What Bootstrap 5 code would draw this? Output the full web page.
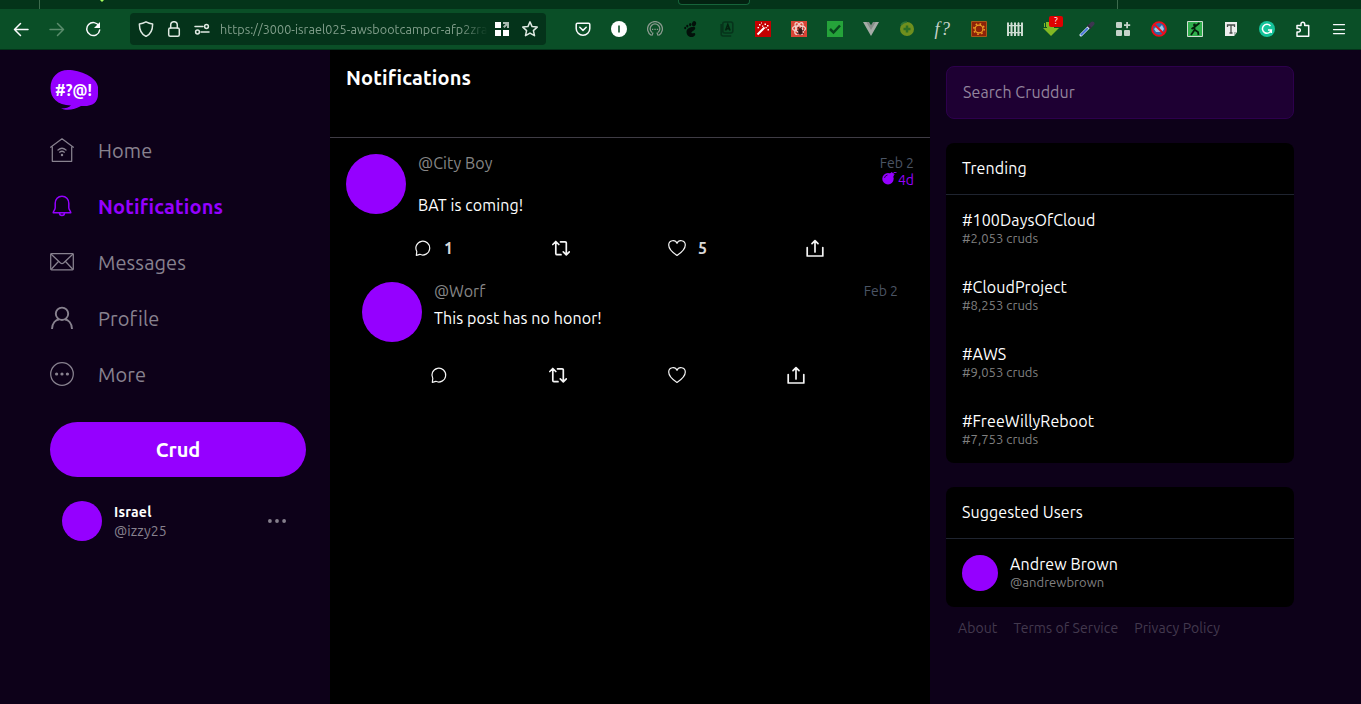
<!DOCTYPE html>
<html lang="en">
<head>
<meta charset="utf-8">
<title>Cruddur - Notifications</title>
<link href="https://cdn.jsdelivr.net/npm/bootstrap@5.3.0/dist/css/bootstrap.min.css" rel="stylesheet">
<style>
:root{--purple:#9500ff;--night:#0d0119;--gray:#88828f}
body{font-family:Ubuntu,"Noto Sans",sans-serif;background:var(--night);color:#fff;height:704px;overflow:hidden;line-height:18px;font-size:16px;letter-spacing:.09px}
svg{display:block;flex:none}
.ln{fill:none;stroke:currentColor;stroke-width:1.5;stroke-linecap:round;stroke-linejoin:round}
.thin{stroke-width:1.25}
.t{white-space:nowrap;display:block}
.tabstrip{height:9px;background:#043419}
.tabsep{width:1px;height:9px;background:#3d6b4d}
.tabpeek{width:72px;height:5px;background:#032211;border:1px solid #16643a;border-top:0;border-radius:0 0 4px 4px}
.toolbar{height:41px;background:#0a4f27;border-bottom:1px solid #04331a;padding-left:3px;color:#fbfbfe}
.tool{width:36px;height:40px;display:flex;align-items:center;justify-content:center}
.urlbar{width:416px;height:32px;background:#04331a;border-radius:4px;margin-left:19px;margin-right:19px;color:#dfe9e2}
.urltext{width:268px;margin-left:10px;font-size:12.6px;letter-spacing:.05px;color:#829f8c;-webkit-mask-image:linear-gradient(90deg,#000 90%,transparent)}
.app{height:654px}
.sidebar-left{width:330px;padding:20px 24px 0 50px}
.navrow{height:56px;color:var(--gray);text-decoration:none;font-size:20px;gap:24px}
.navrow .t{padding-top:2px}
.navrow.on{color:var(--purple);font-weight:700;letter-spacing:.17px}
.crud{height:55px;border-radius:28px;background:var(--purple);color:#fff;font-weight:700;font-size:20px;border:0;margin-top:20px}
.ava{background:var(--purple);border-radius:50%;flex:none}
.me{padding:24px 18px 0 12px;gap:12px;font-size:14px}
.feed{width:600px;background:#000}
.feedhead{height:88px;border-bottom:1px solid #3f3c45;padding:19px 16px;font-size:20px;font-weight:700;letter-spacing:.17px}
.post{padding:16px 16px 0}
.reply{padding:24px 32px 0}
.handle{color:#868686}
.when{font-size:14px;letter-spacing:0;color:#4b5464}
.acts{color:#f5f5f5}
.count{font-weight:700;color:#d9d9d9}
.sidebar-right{width:364px;padding:16px 0 0 16px}
.search{height:53px;background:#1e0033;border:1px solid #2d004d;border-radius:8px;color:#93859d;padding:0 16px 1px}
.panel{background:#000;border-radius:8px;margin-top:24px}
.panelhead{height:52px;border-bottom:1px solid #1f2430;padding:0 16px 1px}
.tag{height:67px;padding:16px 16px 0}
.sub{color:#808080;font-size:13px;letter-spacing:.04px}
.foot{padding:12px 12px;gap:16px;font-size:14px;color:#43394e}
</style>
</head>
<body>
<header>
<div class="tabstrip d-flex">
<div class="tabsep" style="margin-left:39px"></div>
<svg width="6" height="3" style="margin-left:59px" viewBox="0 0 6 3"><path d="M1 0h4L3 2z" fill="#a6ff5c"/></svg>
<div class="tabpeek" style="margin-left:573px"></div>
<div class="tabsep" style="margin-left:367px"></div>
</div>
<div class="toolbar d-flex align-items-center">
<div class="tool"><svg class="ln" width="16" height="16" viewBox="0 0 16 16"><path d="M15 8.500H1.500M7.500 2.500l-6 6 6 6"/></svg></div>
<div class="tool" style="color:#5a8c6c"><svg class="ln" width="16" height="16" viewBox="0 0 16 16"><path d="M1 8.500h13.500M8.500 2.500l6 6-6 6"/></svg></div>
<div class="tool"><svg width="16" height="16" viewBox="0 0 16 16"><path class="ln" d="M14 5A6.500 6.500 0 1 0 14.700 9"/><path fill="currentColor" d="M15 1v6H9z"/></svg></div>
<div class="urlbar d-flex align-items-center">
<svg class="ln" style="margin-left:8px" width="16" height="16" viewBox="0 0 16 16"><path d="M8 .8c2.500 1.300 4.600 1.900 6.600 2.200C14.700 8.500 13 13 8 15.400 3 13 1.300 8.500 1.400 3 3.400 2.700 5.500 2.100 8 .8z"/></svg>
<svg class="ln" style="margin-left:12px" width="16" height="16" viewBox="0 0 16 16"><rect x="2.700" y="7" width="10.600" height="8.200" rx="1.500"/><path d="M4.700 7V4a3.300 3.300 0 0 1 6.600 0v3"/></svg>
<svg class="ln" style="margin-left:12px" width="16" height="16" viewBox="0 0 16 16"><path d="M1 5.500h8M7 11h8"/><circle cx="12.500" cy="5.500" r="1.900"/><circle cx="3.500" cy="11" r="1.900"/></svg>
<div class="urltext"><span class="t">https://3000-israel025-awsbootcampcr-afp2zra</span></div>
<svg style="margin-left:6px" width="16" height="16" viewBox="0 0 16 16" fill="#fff"><path d="M1 1h6v6H1zM1 9h6v6H1zM9 9h6v6H9z"/><path fill="#a9b9af" d="M9 1h6v6h-2V4.500L10.500 7 9 5.500 11.500 3H9z"/></svg>
<svg class="ln" style="margin-left:12px" width="16" height="16" viewBox="0 0 16 16"><path d="M8 .9l2.100 4.700 5.100.5-3.800 3.500 1.100 5.100L8 12.100l-4.500 2.600 1.100-5.100L.8 6.100l5.100-.5z"/></svg>
</div>
<div class="tool"><svg class="ln" width="16" height="16" viewBox="0 0 16 16"><path d="M2.500 2.200h11q1.300 0 1.300 1.300V7.500a6.800 6.800 0 0 1-13.600 0V3.500q0-1.300 1.300-1.300zM4.800 6.200 8 9.400l3.200-3.200"/></svg></div>
<div class="tool"><svg width="16" height="16" viewBox="0 0 16 16"><circle cx="8" cy="8" r="8" fill="#fff"/><path d="M7.200 4.500h1.600v7H7.200z" fill="#0a4f27"/></svg></div>
<div class="tool"><svg width="16" height="16" viewBox="0 0 16 16" fill="none" stroke="#8a9a8e" stroke-width="1.300"><path d="M4.500 14.500a7.400 7.400 0 1 1 7 0M5 11.500a4.800 4.800 0 1 1 6 0"/><path d="M5 8.300h1.300M7.400 8.300h1.300M9.800 8.300h1.300M5 14.500l1-3M11 14.500l-1-3"/></svg></div>
<div class="tool"><svg width="16" height="16" viewBox="0 0 16 16" fill="#03100a"><ellipse cx="11" cy="2.800" rx="2" ry="2.700" transform="rotate(20 11 2.800)"/><ellipse cx="7.200" cy="3.600" rx="1.200" ry="1.600"/><ellipse cx="4.300" cy="5.100" rx="1.100" ry="1.400"/><ellipse cx="2.200" cy="7" rx="1" ry="1.300"/><path d="M12 6.300C8 5.500 3.500 7.500 3.500 11c0 3 2.500 5 5 5s4.500-2 3.500-3.500-2.500.5-3.500-.5C7.500 10.500 13.500 9.500 12 6.300z"/></svg></div>
<div class="tool"><svg width="16" height="16" viewBox="0 0 16 16" fill="none" stroke="#06341b" stroke-width="1.600"><rect x="3.800" y="1" width="10" height="11" rx="2"/><path d="M2.200 3v10q0 2 2 2h8"/><path stroke="#03210f" d="m6.600 9.500 2.200-6 2.200 6M7.200 7.700h3.200"/></svg></div>
<div class="tool"><svg width="16" height="16" viewBox="0 0 16 16"><path fill="#c40000" d="M0 0h16v16H0z"/><path stroke="#fff" stroke-width="2" d="m2.500 13.500 7-7"/><path fill="#fff" d="M4 3h1.500v1.500H4zM7 4.500h1.300v1.300H7zM9.500 2.500H11V4H9.500zM12 4h1.500v1.500H12zM10.500 6h1.300v1.300h-1.300zM12.500 8H14v1.500h-1.500zM2.500 6H4v1.300H2.500zM6 1.500h1v1H6z"/></svg></div>
<div class="tool"><svg width="16" height="16" viewBox="0 0 16 16"><path fill="#d94436" d="M0 0h16v16H0z"/><g fill="none" stroke="#f1cec9" stroke-width="1.300"><ellipse cx="8" cy="7.500" rx="6.500" ry="2.700"/><ellipse cx="8" cy="7.500" rx="6.500" ry="2.700" transform="rotate(60 8 7.500)"/><ellipse cx="8" cy="7.500" rx="6.500" ry="2.700" transform="rotate(120 8 7.500)"/></g><ellipse cx="9.300" cy="10.500" rx="2" ry="3.300" fill="#3b1616"/><path d="m6 9 7 4M6 13l7-4M7 6l2 3 2-3" stroke="#3b1616" fill="none"/></svg></div>
<div class="tool"><svg width="16" height="16" viewBox="0 0 16 16"><path fill="#25a33a" d="M0 0h16v16H0z"/><path d="m3 8 3.500 3.500L13 4.500" fill="none" stroke="#08451d" stroke-width="2.500"/></svg></div>
<div class="tool"><svg width="16" height="16" viewBox="0 0 16 16"><path fill="#a5aca7" d="M0 1h5l3 5 3-5h5L8 15z"/><path fill="#868d89" d="M3.300 1H6l2 3.300L10 1h2.700L8 9z"/></svg></div>
<div class="tool"><svg width="16" height="16" viewBox="0 0 16 16"><circle cx="8" cy="8" r="7" fill="#6f8f1e"/><path d="M8 4.500v7M4.500 8h7" stroke="#2c6f24" stroke-width="2.500"/><path d="M2 4a7 7 0 0 1 6-3" fill="none" stroke="#2c7335" stroke-width="1.500"/></svg></div>
<div class="tool"><span style="font:italic 18px 'Liberation Serif',serif;color:#c5d2c9;letter-spacing:1.500px">f?</span></div>
<div class="tool"><svg width="16" height="16" viewBox="0 0 16 16"><path fill="#8e2209" stroke="#a55a19" d="M.5.500h15v15H.5z"/><circle cx="8" cy="8" r="3.900" fill="none" stroke="#e99c23" stroke-width="1.200"/><circle cx="8" cy="8" r="5.200" fill="none" stroke="#e99c23" stroke-width="1.600" stroke-dasharray="1.600 2.480"/></svg></div>
<div class="tool"><svg width="16" height="16" viewBox="0 0 16 16" fill="#cddbd1"><path d="M0 2l1-1 1 1v13H0zM3.500 2l1-1 1 1v13h-2zM7 2l1-1 1 1v13H7zM10.500 2l1-1 1 1v13h-2zM14 2l1-1 1 1v13h-2z"/><path d="M0 4h16v1.200H0zM0 11h16v1.200H0z"/></svg></div>
<div class="tool position-relative"><svg width="16" height="16" viewBox="0 0 16 16"><path fill="#82b923" d="M4 1h2v1h5v5h5l-8 8-8-8h4z"/><path stroke="#82b923" d="M1.500 2v4M3.500 1v5"/></svg><span class="position-absolute text-center" style="left:16px;top:7px;width:14px;height:11px;border-radius:2px;background:#e00000;color:#fff;font-size:9px;line-height:11px">?</span></div>
<div class="tool"><svg width="16" height="16" viewBox="0 0 16 16"><path stroke="#e7efff" stroke-width="3" stroke-linecap="round" d="m2 14 8-8"/><path stroke="#4473d8" stroke-width="1.900" stroke-linecap="round" d="m2.300 13.700 6-6"/><path stroke="#3d3650" stroke-width="4" stroke-linecap="round" d="m11.500 4.500 2-2"/><path stroke="#332c3d" stroke-width="2" d="m8.500 4 3.500 3.500"/></svg></div>
<div class="tool"><svg width="16" height="16" viewBox="0 0 16 16" fill="#c5d3ca"><rect x="1" y="1" width="6" height="6" rx="1"/><rect x="1" y="9" width="6" height="6" rx="1"/><rect x="9" y="9" width="6" height="6" rx="1"/><path d="M11.200 1h1.800v2.200h2.200V5H13v2.200h-1.800V5H9V3.200h2.200z"/></svg></div>
<div class="tool"><svg width="16" height="16" viewBox="0 0 16 16"><circle cx="8" cy="8" r="7" fill="#2c68a8"/><path d="M3 8l3-3 2 2 3-3 2 4-2 3H5z" fill="#9fc5e5"/><circle cx="8" cy="8" r="6.900" fill="none" stroke="#f00b18" stroke-width="1.900"/><path d="m3.500 3.500 9 9" stroke="#f00b18" stroke-width="1.900"/></svg></div>
<div class="tool"><svg width="16" height="16" viewBox="0 0 16 16"><path fill="#2fae4c" stroke="#d1ddd3" d="M.5.500h15v15H.5z"/><path d="m4 14 3.500-5V6l5-4M8 9l3 2 .5 3M4.500 8l3-2" fill="none" stroke="#041e0b" stroke-width="1.800"/><circle cx="7.500" cy="4" r="1.400" fill="#041e0b"/></svg></div>
<div class="tool"><svg width="16" height="16" viewBox="0 0 16 16"><path fill="#eee" d="M2 1h12v10l-3 4H2z"/><path fill="#aeb5b0" d="M14 11h-3v4z"/><path d="M4.500 6V4h7v2M8 4v8M6.500 12h3" fill="none" stroke="#454c48" stroke-width="1.300"/></svg></div>
<div class="tool"><svg width="16" height="16" viewBox="0 0 16 16"><circle cx="8" cy="8" r="8" fill="#15c39a"/><path d="M11.500 5A4.500 4.500 0 1 0 12.300 9H9M12.300 9v3" fill="none" stroke="#fff" stroke-width="1.500"/></svg></div>
<div class="tool"><svg class="ln" width="16" height="16" viewBox="0 0 16 16"><path d="M2 15.200V11h1.500a1.800 1.800 0 0 0 0-3.600H2V4.500h4V3a1.800 1.800 0 0 1 3.700 0v1.500h4v10.700z"/></svg></div>
<div class="tool"><svg class="ln thin" width="16" height="16" viewBox="0 0 16 16"><path d="M2.500 3.500h11M2.500 8.500h11M2.500 12.500h11"/></svg></div>
</div>
</header>

<div class="app d-flex">
<nav class="sidebar-left">
<svg width="48" height="40" viewBox="0 0 48 40"><path fill="#9500ff" d="M18 0C8 0 .5 7 .5 18 .5 28 7 35 21 35.500c-2 2-5 3-10 3 6 2.500 14 1 20-2.500 11 .8 17-3 17-12V17C47 7 30 0 18 0z"/><text x="5" y="26" textLength="37" lengthAdjust="spacingAndGlyphs" fill="#fff" font-size="17" font-weight="700">#?@!</text></svg>
<div style="padding-top:12px">
<a class="navrow d-flex align-items-center" href="#"><svg width="24" height="24" viewBox="0 0 24 24" class="ln thin"><path d="M.6 9.200 12 .8l11.400 8.400M2.300 8v15.300h19.400V8M8 12q4-3.500 8 0M9.600 14.200q2.400-1.900 4.800 0"/><circle cx="12" cy="17" r=".6" fill="currentColor"/></svg><span class="t">Home</span></a>
<a class="navrow on d-flex align-items-center" href="#"><svg width="24" height="24" viewBox="0 0 24 24" class="ln"><path d="M12 2.300c-4 0-6.800 3-6.800 7v4.500c0 2-2 3.500-2 5h17.600c0-1.500-2-3-2-5V9.300c0-4-2.800-7-6.800-7zM9.500 19a2.500 2.500 0 0 0 5 0"/></svg><span class="t">Notifications</span></a>
<a class="navrow d-flex align-items-center" href="#"><svg width="24" height="24" viewBox="0 0 24 24" class="ln thin"><rect x=".7" y="3.700" width="22.600" height="16.200" rx=".8"/><path d="m1.500 4.500 9 8.500q1.500 1.300 3 0l9-8.500M1.500 19l6.500-7M22.500 19 16 12"/></svg><span class="t">Messages</span></a>
<a class="navrow d-flex align-items-center" href="#"><svg width="24" height="24" viewBox="0 0 24 24" class="ln" style="stroke-width:1.900;stroke-linecap:butt"><circle cx="12" cy="7.800" r="6.200"/><path d="M2 23c0-6 4-9.500 7-9.500M22 23c0-6-4-9.500-7-9.500"/></svg><span class="t">Profile</span></a>
<a class="navrow d-flex align-items-center" href="#"><svg width="24" height="24" viewBox="0 0 24 24" class="ln thin"><circle cx="12" cy="12" r="11.300"/><g fill="currentColor" stroke="none"><circle cx="6.600" cy="12" r="1.600"/><circle cx="12" cy="12" r="1.600"/><circle cx="17.400" cy="12" r="1.600"/></g></svg><span class="t">More</span></a>
</div>
<button class="crud w-100 d-flex align-items-center justify-content-center"><span class="t">Crud</span></button>
<div class="me d-flex align-items-center">
<div class="ava" style="width:40px;height:40px"></div>
<div class="flex-grow-1"><div class="d-flex fw-bold" style="margin-bottom:1px;letter-spacing:.2px"><span class="t">Israel</span></div><div class="d-flex" style="color:var(--gray)"><span class="t">@izzy25</span></div></div>
<svg width="22" height="6" viewBox="0 0 22 6" fill="#857f8c"><circle cx="3.900" cy="3" r="1.900"/><circle cx="11" cy="3" r="1.900"/><circle cx="18.100" cy="3" r="1.900"/></svg>
</div>
</nav>

<main class="feed">
<div class="feedhead d-flex align-items-start"><span class="t">Notifications</span></div>
<article class="post">
<div class="d-flex">
<div class="ava" style="width:60px;height:60px"></div>
<div class="flex-grow-1" style="margin-left:12px">
<div class="d-flex justify-content-between" style="height:42px"><span class="t handle">@City Boy</span><div class="when d-flex flex-column align-items-end"><span class="t">Feb 2</span><div class="d-flex" style="color:var(--purple);margin-top:-1px;gap:1px"><svg width="15" height="14" viewBox="0 0 15 14"><circle cx="6" cy="7.700" r="5.700" fill="#9500ff"/><path d="m7.500 3 2.500-1.500 2 2L10.500 6zM11 2.500l1-1h2.500" fill="#9500ff" stroke="#9500ff" stroke-width=".8"/><path d="M2.500 7q.3-2.500 3-3" fill="none" stroke="#2b0050"/></svg><span class="t">4d</span></div></div></div>
<div class="d-flex"><span class="t">BAT is coming!</span></div>
</div></div>
<div class="acts d-flex align-items-center" style="margin:24px 0 0 68px;height:20px">
<div class="d-flex align-items-center" style="width:138px;gap:12px"><svg class="ln" width="18" height="18" viewBox="0 0 18 18" style="stroke-width:1.200"><path d="M2.300 16.300l.5-3.800A6.900 6.900 0 1 1 5.800 15.300z"/></svg><span class="t count">1</span></div>
<svg class="ln" style="margin-right:98px;stroke-width:1.700" width="18" height="18" viewBox="0 0 18 18"><path d="m.8 5.500 3-3 3 3M3.800 3v11.500q0 1.200 1.200 1.200H9M11.300 12.800l3 3 3-3M14.300 15V4q0-1.200-1.200-1.200H8.500"/></svg>
<div class="d-flex align-items-center" style="width:138px;gap:12px"><svg class="ln" width="18" height="18" viewBox="0 0 18 18" style="stroke-width:1.200"><path d="M9 16.400C6 14.400 .7 10.400 .7 5.900A4.300 4.300 0 0 1 9 4.400a4.300 4.300 0 0 1 8.300 1.500C17.300 10.400 12 14.400 9 16.400z"/></svg><span class="t count">5</span></div>
<svg class="ln" style="stroke-width:1.700" width="18" height="18" viewBox="0 0 18 18"><path d="M9 13V1.700M6 4.600 9 1.600l3 3M1.200 8.500V17h15.600V8.500"/></svg>
</div>
</article>
<article class="reply">
<div class="d-flex">
<div class="ava" style="width:60px;height:60px"></div>
<div class="flex-grow-1" style="margin-left:12px">
<div class="d-flex justify-content-between" style="height:27px"><span class="t handle">@Worf</span><span class="t when">Feb 2</span></div>
<div class="d-flex"><span class="t">This post has no honor!</span></div>
</div></div>
<div class="acts d-flex align-items-center" style="margin:24px 0 0 68px;height:18px;gap:101px">
<svg class="ln" width="18" height="18" viewBox="0 0 18 18" style="stroke-width:1.200"><path d="M2.300 16.300l.5-3.800A6.900 6.900 0 1 1 5.800 15.300z"/></svg>
<svg class="ln" style="stroke-width:1.700" width="18" height="18" viewBox="0 0 18 18"><path d="m.8 5.500 3-3 3 3M3.800 3v11.500q0 1.200 1.200 1.200H9M11.300 12.800l3 3 3-3M14.300 15V4q0-1.200-1.200-1.200H8.500"/></svg>
<svg class="ln" width="18" height="18" viewBox="0 0 18 18" style="stroke-width:1.200"><path d="M9 16.400C6 14.400 .7 10.400 .7 5.900A4.300 4.300 0 0 1 9 4.400a4.300 4.300 0 0 1 8.300 1.500C17.300 10.400 12 14.400 9 16.400z"/></svg>
<svg class="ln" style="stroke-width:1.700" width="18" height="18" viewBox="0 0 18 18"><path d="M9 13V1.700M6 4.600 9 1.600l3 3M1.200 8.500V17h15.600V8.500"/></svg>
</div>
</article>
</main>

<aside class="sidebar-right">
<div class="search d-flex align-items-center"><span class="t">Search Cruddur</span></div>
<section class="panel">
<div class="panelhead d-flex align-items-center"><span class="t">Trending</span></div>
<div class="tag"><div class="d-flex"><span class="t">#100DaysOfCloud</span></div><div class="sub d-flex"><span class="t">#2,053 cruds</span></div></div>
<div class="tag"><div class="d-flex"><span class="t">#CloudProject</span></div><div class="sub d-flex"><span class="t">#8,253 cruds</span></div></div>
<div class="tag"><div class="d-flex"><span class="t">#AWS</span></div><div class="sub d-flex"><span class="t">#9,053 cruds</span></div></div>
<div class="tag"><div class="d-flex"><span class="t">#FreeWillyReboot</span></div><div class="sub d-flex"><span class="t">#7,753 cruds</span></div></div>
</section>
<section class="panel">
<div class="panelhead d-flex align-items-center"><span class="t">Suggested Users</span></div>
<div class="d-flex p-3" style="gap:12px;height:68px"><div class="ava" style="width:36px;height:36px"></div><div><div class="d-flex"><span class="t">Andrew Brown</span></div><div class="sub d-flex"><span class="t">@andrewbrown</span></div></div></div>
</section>
<footer class="foot d-flex"><span class="t">About</span><span class="t">Terms of Service</span><span class="t">Privacy Policy</span></footer>
</aside>
</div>
<script src="https://cdn.jsdelivr.net/npm/bootstrap@5.3.0/dist/js/bootstrap.bundle.min.js"></script>
</body>
</html>
